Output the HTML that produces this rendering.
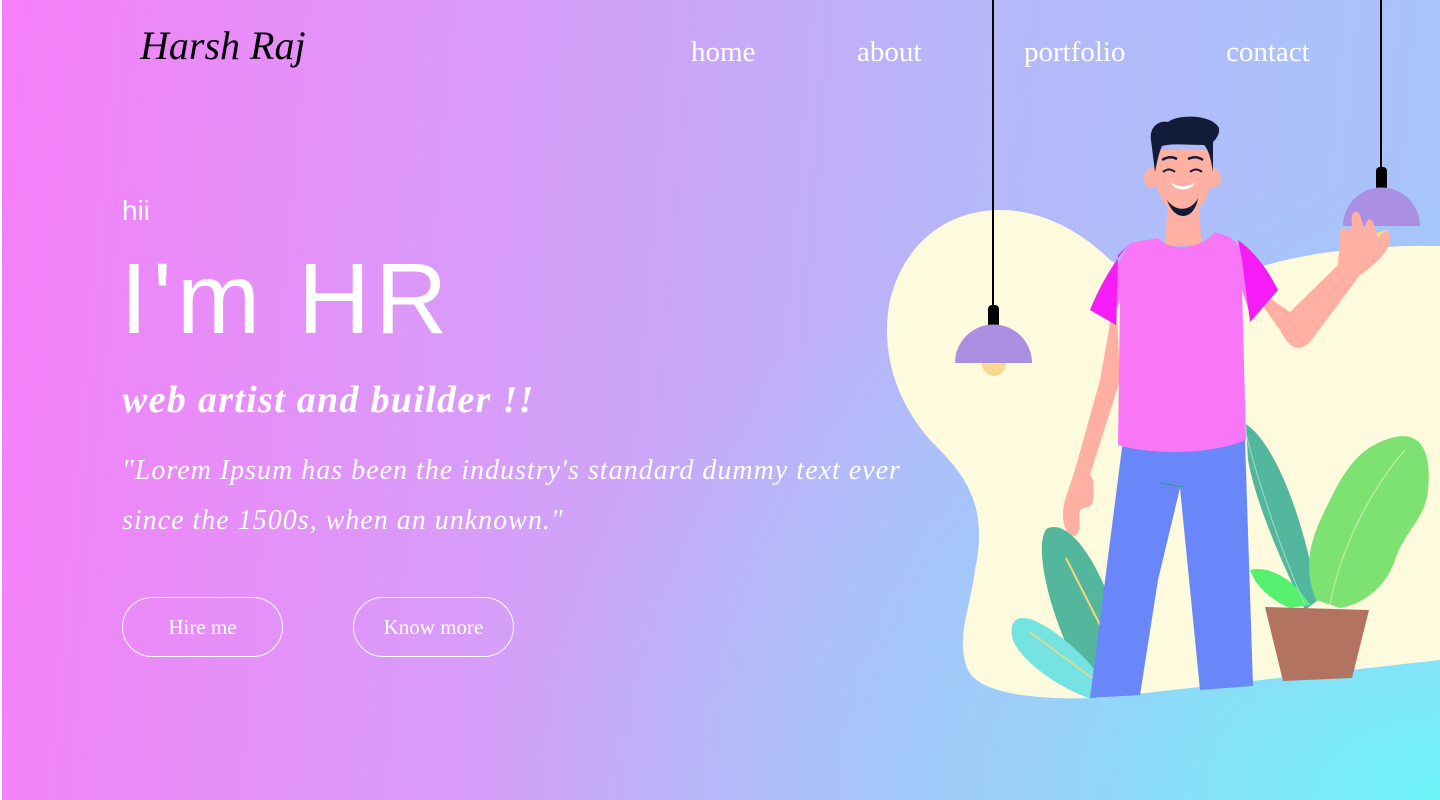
<!DOCTYPE html>
<html><head><meta charset="utf-8"><style>
*{margin:0;padding:0;box-sizing:border-box}
html,body{width:1440px;height:800px;overflow:hidden}
body{position:relative;background:#fff}
.bg{position:absolute;left:2px;top:0;width:1438px;height:800px;
background:radial-gradient(ellipse 950px 620px at 100% 100%, rgba(110,245,248,1) 0%, rgba(140,220,249,0.6) 45%, rgba(160,200,250,0) 100%),linear-gradient(95deg,#f67ff9 0%,#d79df8 35%,#b6b7f9 65%,#a6c6fa 100%);}
.logo{position:absolute;left:140px;top:22px;font-family:"Liberation Serif",serif;font-style:italic;font-size:40px;color:#000;letter-spacing:0px}
.nav{position:absolute;top:36px;font-family:"Liberation Serif",serif;font-size:29px;color:#fff}
.hii{position:absolute;left:122px;top:195px;font-family:"Liberation Sans",sans-serif;font-size:28px;color:#fff}
.hr{position:absolute;left:120px;top:244px;font-family:"Liberation Sans",sans-serif;font-size:100px;color:#fff;line-height:1.1;letter-spacing:5px}
.sub{position:absolute;left:122px;top:378px;font-family:"Liberation Serif",serif;font-style:italic;font-weight:bold;font-size:38px;color:#fff;letter-spacing:1.3px}
.p{position:absolute;left:122px;top:446px;width:790px;font-family:"Liberation Serif",serif;font-style:italic;font-size:28px;line-height:50px;color:#fff;letter-spacing:1px}
.btn{position:absolute;top:597px;width:161px;height:60px;border:1px solid #fff;border-radius:30px;font-family:"Liberation Serif",serif;font-size:21px;color:#fff;text-align:center;line-height:58px}
svg{position:absolute;left:0;top:0}
</style></head><body>
<div class="bg"></div>
<div class="logo">Harsh Raj</div>
<div class="nav" style="left:691px">home</div>
<div class="nav" style="left:857px">about</div>
<div class="nav" style="left:1024px">portfolio</div>
<div class="nav" style="left:1226px">contact</div>
<div class="hii">hii</div>
<div class="hr">I'm HR</div>
<div class="sub">web artist and builder !!</div>
<div class="p">"Lorem Ipsum has been the industry's standard dummy text ever since the 1500s, when an unknown."</div>
<div class="btn" style="left:122px">Hire me</div>
<div class="btn" style="left:353px">Know more</div>
<svg width="1440" height="800" viewBox="0 0 1440 800">
<path d="M1000 210 C1050 210 1090 240 1110 260 C1160 290 1200 290 1250 270 C1310 250 1380 245 1440 246 L1440 660 L1100 698 C1040 700 980 695 968 670 C955 640 970 610 975 570 C990 500 960 470 930 440 C895 400 880 350 890 300 C905 240 950 210 1000 210 Z" fill="#fefade"/>
<path d="M1048 528 C1070 520 1095 560 1110 600 L1095 700 C1070 660 1045 600 1042 555 C1041 540 1044 530 1048 528 Z" fill="#52b79d"/>
<path d="M1066 558 L1100 625" stroke="#f5d77a" stroke-width="2"/>
<path d="M1016 620 C1030 610 1070 640 1095 670 L1095 700 C1060 690 1020 660 1013 640 C1010 630 1012 623 1016 620 Z" fill="#75e3e1"/>
<path d="M1030 632 L1092 678" stroke="#f5d77a" stroke-width="1.5"/>
<path d="M1246 424 C1270 440 1300 500 1318 600 L1305 610 C1280 560 1255 500 1248 460 Z" fill="#52b79d"/>
<path d="M1250 570 C1270 565 1295 580 1310 605 L1290 608 C1270 600 1255 585 1250 570 Z" fill="#55f06e"/>
<path d="M1316 600 C1300 560 1315 530 1330 500 C1345 470 1360 445 1395 437 C1420 432 1432 450 1428 490 C1425 520 1405 530 1395 560 C1385 590 1360 605 1340 608 Z" fill="#7ee273"/>
<path d="M1330 605 C1340 550 1370 490 1405 450" stroke="#c8f0b0" stroke-width="1" fill="none"/>
<path d="M1245 430 C1260 490 1285 560 1305 605" stroke="#a0ddc8" stroke-width="1" fill="none"/>
<path d="M1265 607 L1369 610 L1352 678 L1283 681 Z" fill="#b27461"/>
<path d="M1116 290 L1100 380 L1075 470 L1065 500 C1060 520 1065 535 1075 536 C1082 532 1078 520 1080 510 C1086 505 1092 510 1093 500 C1094 480 1093 478 1090 475 L1120 380 Z" fill="#ffb0a2"/>
<path d="M1255 295 L1280 330 C1290 350 1300 352 1310 342 L1360 275 C1375 265 1390 250 1390 240 C1392 230 1385 228 1378 238 L1375 228 C1372 215 1365 218 1365 230 L1360 215 C1356 208 1350 212 1352 225 L1348 232 C1345 225 1338 228 1340 240 L1338 265 L1290 312 L1265 295 Z" fill="#ffb0a2"/>
<path d="M1168 200 L1165 245 L1202 245 L1198 200 Z" fill="#ffb0a2"/>
<path d="M1123 440 L1090 698 L1140 695 L1158 580 L1180 488 L1200 690 L1253 686 L1245 440 Z" fill="#6987f8"/>
<path d="M1160 483 L1183 487" stroke="#2a9a8a" stroke-width="1"/>
<path d="M1130 243 L1090 310 L1112 322 L1120 300 L1118 445 C1150 455 1210 455 1246 440 L1242 290 L1252 320 L1278 290 C1265 270 1245 250 1230 237 L1215 232 C1200 250 1170 252 1158 238 Z" fill="#f977f7"/>
<path d="M1130 243 C1115 260 1100 285 1090 310 L1116 325 L1118 255 Z" fill="#f61cf7"/>
<path d="M1238 240 C1255 252 1268 270 1278 290 L1250 322 L1242 260 Z" fill="#f61cf7"/>
<ellipse cx="1152" cy="178" rx="8" ry="10" fill="#ffb0a2"/>
<ellipse cx="1213" cy="178" rx="8" ry="10" fill="#ffb0a2"/>
<path d="M1153 150 C1153 188 1162 212 1183 215 C1206 212 1214 188 1213 150 Z" fill="#ffb0a2"/>
<path d="M1167 200 C1175 212 1191 212 1198 198 C1196 211 1189 216 1183 216 C1176 216 1170 209 1167 200 Z" fill="#121c38"/>
<path d="M1171 182 C1179 188 1188 188 1195 182 C1192 192 1174 192 1171 182 Z" fill="#fff"/>
<path d="M1155 172 L1151 140 C1149 126 1160 120 1168 122 C1178 114 1212 114 1219 128 C1220 135 1215 140 1213 142 L1213 172 C1211 160 1209 150 1204 145 C1190 145 1172 143 1162 146 C1158 155 1157 163 1155 172 Z" fill="#121c38"/>
<path d="M1163 172 Q1169 167 1175 172 M1190 172 Q1196 167 1202 172" stroke="#121c38" stroke-width="2" fill="none"/>
<path d="M1162 160 Q1170 155 1177 159 M1188 159 Q1196 155 1203 160" stroke="#121c38" stroke-width="2.5" fill="none"/>
<line x1="993" y1="0" x2="993" y2="310" stroke="#000" stroke-width="2"/>
<rect x="988" y="305" width="11" height="24" rx="4" fill="#000"/>
<circle cx="994" cy="364" r="12" fill="#f8d890"/>
<path d="M955 363 A38 38 0 0 1 1032 363 Z" fill="#ab8fe2"/>
<line x1="1381" y1="0" x2="1381" y2="172" stroke="#000" stroke-width="2"/>
<rect x="1376" y="167" width="11" height="24" rx="4" fill="#000"/>
<path d="M1343 226 A38 38 0 0 1 1420 226 Z" fill="#ab8fe2"/>
<path d="M1380 232 C1370 232 1375 240 1382 240 C1388 240 1392 232 1385 230 Z" fill="#f8d890"/>
<path d="M1340 240 L1338 265 L1360 275 C1375 265 1390 250 1390 240 C1392 230 1385 228 1378 238 L1375 228 C1372 215 1365 218 1365 230 L1360 215 C1356 208 1350 212 1352 225 L1348 232 C1345 225 1338 228 1340 240 Z" fill="#ffb0a2"/>
</svg>
</body></html>
